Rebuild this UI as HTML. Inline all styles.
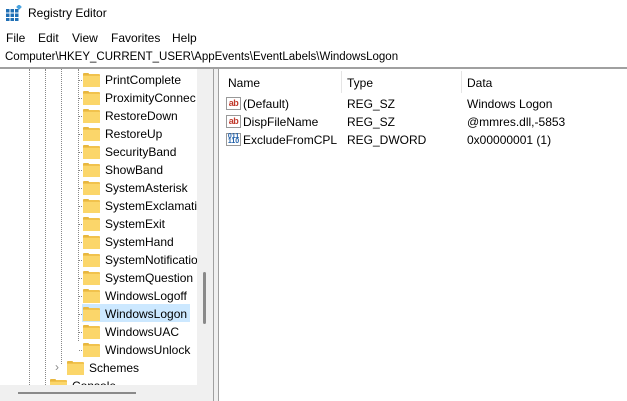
<!DOCTYPE html>
<html><head><meta charset="utf-8"><style>
*{margin:0;padding:0;box-sizing:border-box}
body{width:627px;height:401px;overflow:hidden;background:#f0f0f0;font-family:"Liberation Sans",sans-serif;font-size:12px;color:#000;position:relative}
.a{position:absolute;white-space:nowrap}
.fold{position:absolute;width:17px;height:13px;background:#f1c24d;border-radius:1px}
.fold:before{content:"";position:absolute;left:0;top:-1px;width:6px;height:2px;background:#e8b73f;border-radius:1px 1px 0 0}
.fold:after{content:"";position:absolute;left:0;top:2px;width:17px;height:11px;background:#fbd66a}
.vd{position:absolute;width:1px;border-left:1px dotted #888}
.hd{position:absolute;height:1px;border-top:1px dotted #888}
.ab{position:absolute;width:15px;height:13px;border:1px solid #999;background:#fff;font-size:9px;font-weight:bold;color:#c0392b;line-height:11px;text-align:center;letter-spacing:-0.5px}
</style></head><body>
<div class="a" style="left:0;top:0;width:627px;height:28px;background:#fff"></div>
<svg class="a" style="left:6px;top:5px" width="16" height="16" viewBox="0 0 16 16"><g fill="#1f6fb5"><rect x="0" y="4" width="3.5" height="3.5"/><rect x="4.5" y="4" width="3.5" height="3.5"/><rect x="9" y="4" width="3.5" height="3.5"/><rect x="0" y="8.5" width="3.5" height="3.5"/><rect x="4.5" y="8.5" width="3.5" height="3.5"/><rect x="9" y="8.5" width="3.5" height="3.5"/><rect x="0" y="13" width="3.5" height="3"/><rect x="4.5" y="13" width="3.5" height="3"/><rect x="9" y="13" width="3.5" height="3"/></g><rect x="11" y="0" width="4" height="4" fill="#4aa3df" transform="rotate(45 13 2)"/></svg>
<div class="a" style="left:28px;top:6px;font-size:12px">Registry Editor</div>
<div class="a" style="left:0;top:28px;width:627px;height:20px;background:#fff"></div>
<div class="a" style="left:6px;top:31px">File</div>
<div class="a" style="left:38px;top:31px">Edit</div>
<div class="a" style="left:72px;top:31px">View</div>
<div class="a" style="left:111px;top:31px">Favorites</div>
<div class="a" style="left:172px;top:31px">Help</div>
<div class="a" style="left:0;top:48px;width:627px;height:20px;background:#fff"></div>
<div class="a" style="left:5px;top:51px;font-size:11.5px">Computer\HKEY_CURRENT_USER\AppEvents\EventLabels\WindowsLogon</div>
<div class="a" style="left:0;top:67px;width:627px;height:2px;background:#a0a0a0"></div>
<div class="a" style="left:0;top:69px;width:197px;height:316px;background:#fff;overflow:hidden">
<div class="vd" style="left:29px;top:0;height:320px"></div>
<div class="vd" style="left:45px;top:0;height:320px"></div>
<div class="vd" style="left:61px;top:0;height:295px"></div>
<div class="vd" style="left:78px;top:0;height:272px"></div>
<div class="a" style="left:82px;top:235px;width:108px;height:18px;background:#cce8ff"></div>
<div id="rows"></div>
</div>
<script>
var n=["PrintComplete","ProximityConnec","RestoreDown","RestoreUp","SecurityBand","ShowBand","SystemAsterisk","SystemExclamatio","SystemExit","SystemHand","SystemNotificatio","SystemQuestion","WindowsLogoff","WindowsLogon","WindowsUAC","WindowsUnlock"];
var h="";
for(var i=0;i<n.length;i++){var t=2+i*18;h+='<div class="hd" style="left:79px;top:'+(t+9)+'px;width:5px"></div><div class="fold" style="left:83px;top:'+(t+3)+'px"></div><div class="a" style="left:105px;top:'+(t+2)+'px;font-size:12px">'+n[i]+'</div>';}
var t=2+16*18;
h+='<div class="a" style="left:55px;top:'+(t+1)+'px;color:#888;font-size:12px">&#8250;</div><div class="fold" style="left:67px;top:'+(t+3)+'px"></div><div class="a" style="left:89px;top:'+(t+2)+'px">Schemes</div>';
t+=18;h+='<div class="fold" style="left:50px;top:'+(t+3)+'px"></div><div class="a" style="left:72px;top:'+(t+2)+'px">Console</div>';
document.getElementById("rows").innerHTML=h;
</script>
<div class="a" style="left:203px;top:272px;width:3px;height:52px;background:#8a8a8a;border-radius:2px"></div>
<div class="a" style="left:18px;top:392px;width:118px;height:2px;background:#8a8a8a"></div>
<div class="a" style="left:213px;top:69px;width:1px;height:332px;background:#a0a0a0"></div>
<div class="a" style="left:218px;top:69px;width:1px;height:332px;background:#a0a0a0"></div>
<div class="a" style="left:219px;top:69px;width:408px;height:332px;background:#fff"></div>
<div class="a" style="left:228px;top:76px">Name</div>
<div class="a" style="left:347px;top:76px">Type</div>
<div class="a" style="left:467px;top:76px">Data</div>
<div class="a" style="left:341px;top:71px;width:1px;height:22px;background:#e5e5e5"></div>
<div class="a" style="left:461px;top:71px;width:1px;height:22px;background:#e5e5e5"></div>
<div class="ab" style="left:226px;top:97px">ab</div>
<div class="a" style="left:243px;top:97px">(Default)</div>
<div class="a" style="left:347px;top:97px">REG_SZ</div>
<div class="a" style="left:467px;top:97px">Windows Logon</div>
<div class="ab" style="left:226px;top:115px">ab</div>
<div class="a" style="left:243px;top:115px">DispFileName</div>
<div class="a" style="left:347px;top:115px">REG_SZ</div>
<div class="a" style="left:467px;top:115px">@mmres.dll,-5853</div>
<div class="ab" style="left:226px;top:133px;color:#1f5fa8;font-size:7px;line-height:5px;letter-spacing:0">011<br>110</div>
<div class="a" style="left:243px;top:133px">ExcludeFromCPL</div>
<div class="a" style="left:347px;top:133px">REG_DWORD</div>
<div class="a" style="left:467px;top:133px">0x00000001 (1)</div>
</body></html>
